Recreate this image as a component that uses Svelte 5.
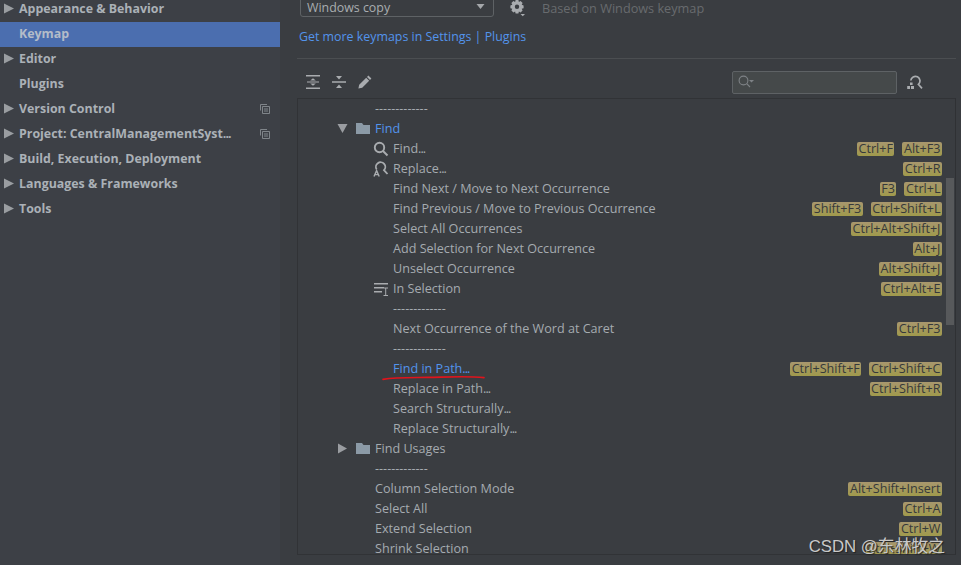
<script>
	const nav = [
		{ label: 'Appearance & Behavior', arrow: true },
		{ label: 'Keymap', selected: true },
		{ label: 'Editor', arrow: true },
		{ label: 'Plugins' },
		{ label: 'Version Control', arrow: true, copy: true },
		{ label: 'Project: CentralManagementSyst...', arrow: true, copy: true },
		{ label: 'Build, Execution, Deployment', arrow: true },
		{ label: 'Languages & Frameworks', arrow: true },
		{ label: 'Tools', arrow: true }
	];

	const sep = '-------------';

	// level 0 = group under Main menu, level 1 = action inside the Find folder
	const rows = [
		{ label: sep, level: 0 },
		{ label: 'Find', level: 0, folder: 'open', blue: true },
		{ label: 'Find...', level: 1, icon: 'find', keys: ['Ctrl+F', 'Alt+F3'] },
		{ label: 'Replace...', level: 1, icon: 'replace', keys: ['Ctrl+R'] },
		{ label: 'Find Next / Move to Next Occurrence', level: 1, keys: ['F3', 'Ctrl+L'] },
		{ label: 'Find Previous / Move to Previous Occurrence', level: 1, keys: ['Shift+F3', 'Ctrl+Shift+L'] },
		{ label: 'Select All Occurrences', level: 1, keys: ['Ctrl+Alt+Shift+J'] },
		{ label: 'Add Selection for Next Occurrence', level: 1, keys: ['Alt+J'] },
		{ label: 'Unselect Occurrence', level: 1, keys: ['Alt+Shift+J'] },
		{ label: 'In Selection', level: 1, icon: 'selection', keys: ['Ctrl+Alt+E'] },
		{ label: sep, level: 1 },
		{ label: 'Next Occurrence of the Word at Caret', level: 1, keys: ['Ctrl+F3'] },
		{ label: sep, level: 1 },
		{ label: 'Find in Path...', level: 1, blue: true, mark: true, keys: ['Ctrl+Shift+F', 'Ctrl+Shift+C'] },
		{ label: 'Replace in Path...', level: 1, keys: ['Ctrl+Shift+R'] },
		{ label: 'Search Structurally...', level: 1 },
		{ label: 'Replace Structurally...', level: 1 },
		{ label: 'Find Usages', level: 0, folder: 'closed' },
		{ label: sep, level: 0 },
		{ label: 'Column Selection Mode', level: 0, keys: ['Alt+Shift+Insert'] },
		{ label: 'Select All', level: 0, keys: ['Ctrl+A'] },
		{ label: 'Extend Selection', level: 0, keys: ['Ctrl+W'] },
		{ label: 'Shrink Selection', level: 0, keys: ['Ctrl+Shift+W'] }
	];

	// the trailing dots are set tighter than the font's own periods
	const stem = (s) => s.replace(/\.\.\.$/, '');
	const dotted = (s) => s.endsWith('...');
</script>

<div class="window">
	<aside class="sidebar">
		{#each nav as item}
			<div class="nav-row" class:selected={item.selected}>
				<span class="nav-arrow">{#if item.arrow}<svg width="11" height="11" viewBox="0 0 11 11"><path d="M0 0.5 L10 5.5 L0 10.5 Z" fill="#9a9da1" /></svg>{/if}</span>
				<span class="nav-label">{stem(item.label)}{#if dotted(item.label)}<span class="dots">...</span>{/if}</span>
				{#if item.copy}
					<svg class="copy" width="10" height="10" viewBox="0 0 10 10" fill="none" stroke="#80858a">
						<path d="M0.5 6.5 V0.5 H7" />
						<path d="M2.5 2.5 H9.5 V9.5 H2.5 Z M4 5 H8 M4 7 H8" />
					</svg>
				{/if}
			</div>
		{/each}
	</aside>

	<main class="content">
		<div class="top">
			<div class="combo">
				<span class="combo-text">Windows copy</span>
				<svg width="10" height="6" viewBox="0 0 10 6"><path d="M0.5 0 H8.5 L4.5 5 Z" fill="#a4a7aa" /></svg>
			</div>
			<svg class="gear" width="16" height="18" viewBox="0 0 16 18">
				<path fill="#a9acaf" fill-rule="evenodd" d="M5.6 1 H8.4 L8.9 3 L10.6 2.1 L12.6 4.1 L11.7 5.8 L13.6 6.4 V9.2 L11.7 9.8 L12.6 11.5 L10.6 13.5 L8.9 12.6 L8.4 14.6 H5.6 L5.1 12.6 L3.4 13.5 L1.4 11.5 L2.3 9.8 L0.4 9.2 V6.4 L2.3 5.8 L1.4 4.1 L3.4 2.1 L5.1 3 Z M7 5.6 A2.2 2.2 0 1 0 7 10 A2.2 2.2 0 1 0 7 5.6 Z" />
				<path fill="#a9acaf" d="M10.5 15 H15 L12.75 17.2 Z" />
			</svg>
			<span class="based">Based on Windows keymap</span>
		</div>
		<div class="link">Get more keymaps in Settings | Plugins</div>
		<div class="rule"></div>

		<div class="toolbar">
			<svg width="14" height="14" viewBox="0 0 14 14" fill="#a9acaf">
				<path d="M0 0 H14 V1.6 H0 Z M0 12.4 H14 V14 H0 Z M4.2 5.6 H9.8 L7 3.2 Z M4.2 8.4 H9.8 L7 10.8 Z M1 6.4 H13 V7.6 H1 Z" />
			</svg>
			<svg width="14" height="14" viewBox="0 0 14 14" fill="#a9acaf">
				<path d="M0 6.2 H14 V7.8 H0 Z M4 1 H10 L7 4.6 Z M4 13 H10 L7 9.4 Z" />
			</svg>
			<svg width="14" height="14" viewBox="0 0 14 14" fill="#a9acaf">
				<path d="M10.4 0.6 L13.4 3.6 L12 5 L9 2 Z M8.2 2.8 L11.2 5.8 L4.2 12.8 L0.4 13.6 L1.2 9.8 Z" />
			</svg>
			<div class="spacer"></div>
			<div class="search">
				<svg width="16" height="14" viewBox="0 0 16 14" fill="none" stroke="#7e8286" stroke-width="1.1">
					<circle cx="5.5" cy="5.5" r="4.4" />
					<path d="M8.7 8.7 L12 12" />
					<path d="M11 5 H16 L13.5 7.6 Z" fill="#7e8286" stroke="none" />
				</svg>
			</div>
			<svg class="shortcut-search" width="16" height="15" viewBox="0 0 16 15" fill="none" stroke="#a9acaf" stroke-width="1.7">
				<path d="M3.8 5.5 A4.6 4.6 0 1 1 11.4 9.4 L15 13.4" />
				<path d="M3 7.5 H5.6 V10 H3 Z M0.2 11 H3 V14 H0.2 Z M4 11 H7 V14 H4 Z" fill="#a9acaf" stroke="none" />
			</svg>
		</div>

		<div class="tree">
			{#each rows as row}
				<div class="row" class:sub={row.level === 1}>
					{#if row.folder}
						<svg class="twist" width="11" height="11" viewBox="0 0 11 11">
							{#if row.folder === 'open'}
								<path d="M0.5 1 H10.5 L5.5 10 Z" fill="#9a9da1" />
							{:else}
								<path d="M1 0.5 L10 5.5 L1 10.5 Z" fill="#9a9da1" />
							{/if}
						</svg>
						<svg class="folder" width="14" height="11" viewBox="0 0 14 11">
							<path d="M0 0 H6 L7.5 2 H14 V11 H0 Z" fill="#8b9aa6" />
						</svg>
					{/if}
					{#if row.icon === 'find'}
						<svg class="action" width="16" height="16" viewBox="0 0 16 16" fill="none" stroke="#a9acaf" stroke-width="1.9">
							<circle cx="6.5" cy="6.5" r="4.7" />
							<path d="M10 10 L14.5 14.5" />
						</svg>
					{:else if row.icon === 'replace'}
						<svg class="action" width="16" height="16" viewBox="0 0 16 16" fill="none" stroke="#a9acaf" stroke-width="1.8">
							<path d="M3.6 8.4 A4.7 4.7 0 1 1 11 9.2 L14.5 13" />
							<path d="M1 15.5 L3.6 9.6 L6.2 15.5 M2 13.6 H5.2" stroke-width="1.4" />
						</svg>
					{:else if row.icon === 'selection'}
						<svg class="action" width="16" height="16" viewBox="0 0 16 16" fill="#a9acaf">
							<path d="M1 2 H15 V3.4 H1 Z M1 6 H11 V7.4 H1 Z M1 10 H9 V11.4 H1 Z M10.5 6.6 H15 V7.6 H13.2 V14 H15 V15 H10.5 V14 H12.2 V7.6 H10.5 Z" />
						</svg>
					{/if}
					<span class="label" class:blue={row.blue}>
						{stem(row.label)}{#if dotted(row.label)}<span class="dots">...</span>{/if}
						{#if row.mark}
							<svg class="underline" width="104" height="6" viewBox="0 0 104 6" fill="none">
								<path d="M1 4.4 C14 2 30 2.6 46 2.4 S 84 0.8 102 2.6" stroke="#e0141c" stroke-width="1.6" stroke-linecap="round" />
							</svg>
						{/if}
					</span>
					<div class="keys">
						{#each row.keys ?? [] as key}
							<span class="key">{key}</span>
						{/each}
					</div>
				</div>
			{/each}
			<div class="scrollbar"></div>
		</div>
	</main>

	<div class="watermark">CSDN @东林牧之</div>
</div>

<style>
	:global(body) {
		background: #3a3d41;
	}

	.window {
		position: relative;
		display: flex;
		width: 961px;
		height: 565px;
		overflow: hidden;
		font-family: "Open Sans", "Noto Sans", sans-serif;
		font-size: 12.6px;
		color: #a9b0b6;
	}

	.sidebar {
		flex: 0 0 280px;
		margin-top: -3px;
		background: #3d4046;
	}

	.nav-row {
		display: flex;
		align-items: center;
		box-sizing: border-box;
		height: 25px;
		padding-bottom: 2px;
		font-size: 12.4px;
		font-weight: 700;
		color: #abb1b7;
	}

	.nav-row.selected {
		background: #4b6eaf;
		color: #b4bcc8;
	}

	.nav-arrow {
		display: flex;
		flex: 0 0 19px;
		padding-left: 4px;
		box-sizing: border-box;
	}

	.nav-label {
		flex: 1;
	}

	.dots {
		letter-spacing: -1px;
	}

	.copy {
		margin-right: 10px;
	}

	.content {
		display: flex;
		flex-direction: column;
		flex: 1;
		min-width: 0;
		padding: 0 5px 10px 17px;
	}

	.top {
		display: flex;
		align-items: center;
		height: 19px;
		margin-top: -2px;
		padding-left: 3px;
		flex: none;
	}

	.combo {
		display: flex;
		align-items: center;
		justify-content: space-between;
		box-sizing: border-box;
		width: 194px;
		height: 21px;
		margin-top: -2px;
		padding: 0 7px 0 6px;
		border: 1px solid #5e6265;
		border-radius: 3px;
		color: #a9adb0;
		font-size: 12.4px;
	}

	.combo-text {
		padding-top: 2px;
	}

	.gear {
		margin-left: 16px;
	}

	.based {
		margin-left: 16px;
		color: #686b6e;
		font-size: 12.7px;
	}

	.link {
		margin-top: 10px;
		padding-left: 2px;
		color: #5394ec;
		font-size: 12.4px;
		line-height: 20px;
		flex: none;
	}

	.rule {
		height: 1px;
		margin-top: 11px;
		background: #4b4e51;
		flex: none;
	}

	.toolbar {
		display: flex;
		align-items: center;
		gap: 12px;
		height: 32px;
		padding: 7px 33px 0 9px;
		flex: none;
	}

	.spacer {
		flex: 1;
	}

	.search {
		display: flex;
		align-items: center;
		box-sizing: border-box;
		width: 165px;
		height: 23px;
		padding-left: 5px;
		border: 1px solid #5e6265;
		border-radius: 2px;
		background: #45494a;
	}

	.shortcut-search {
		margin-left: -2px;
	}

	.tree {
		position: relative;
		flex: 1;
		min-height: 0;
		overflow: hidden;
		border: 1px solid #313336;
		border-right-color: #2f3134;
	}

	.row {
		position: relative;
		display: flex;
		align-items: center;
		height: 20px;
		padding: 0 13px 0 77px;
		white-space: nowrap;
		color: #a5abb0;
	}

	.row.sub {
		padding-left: 95px;
	}

	.twist {
		position: absolute;
		left: 39px;
		top: 4px;
	}

	.folder {
		position: absolute;
		left: 58px;
		top: 4px;
	}

	.action {
		position: absolute;
		left: 75px;
		top: 2px;
	}

	.label {
		position: relative;
		flex: 1;
		padding-bottom: 2px;
	}

	.blue {
		color: #5394ec;
	}

	.underline {
		position: absolute;
		left: -11px;
		top: 15px;
	}

	.keys {
		display: flex;
		gap: 8px;
	}

	.key {
		height: 14px;
		padding: 0 1.5px;
		border-radius: 2px;
		background: linear-gradient(#a8976e, #a09a4c);
		color: #36393b;
		line-height: 13px;
	}

	.scrollbar {
		position: absolute;
		top: 79px;
		right: 1px;
		width: 8px;
		height: 147px;
		background: #57595b;
	}

	.watermark {
		position: absolute;
		right: 16px;
		bottom: 8px;
		color: #c9c9c9;
		font-family: "Liberation Sans", "Noto Sans CJK SC", sans-serif;
		font-size: 16.8px;
		text-shadow: 1px 1px 1px #222;
	}
</style>
